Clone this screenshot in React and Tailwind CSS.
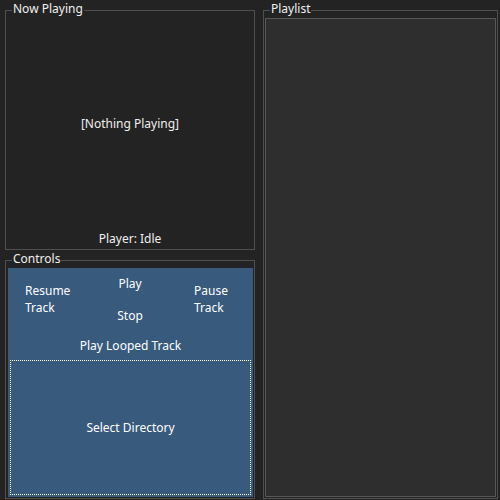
const GroupBox = ({ title, className, children }) => {
  return (
    <div className={`relative border border-[#4f4f4f] ${className}`}>
      <span className="absolute left-[6px] top-[-11px] bg-[#232323] px-[1px] text-[12px] leading-[17px] text-[#f0f0f0]">
        {title}
      </span>
      {children}
    </div>
  )
}

const App = () => {
  return (
    <div
      className="flex h-[500px] w-[500px] gap-[8px] bg-[#232323] pb-[1px] pl-[5px] pr-[2px] pt-[10px] text-[12px] leading-[17px] text-[#f0f0f0]"
      style={{ fontFamily: '"Noto Sans", "Open Sans", sans-serif' }}
    >
      <div className="flex w-[250px] flex-col gap-[10px]">
        <GroupBox title="Now Playing" className="flex h-[240px] flex-col">
          <div className="flex flex-1 items-center justify-center pt-[5px]">[Nothing Playing]</div>
          <div className="pb-[2px] text-center">Player: Idle</div>
        </GroupBox>

        <GroupBox title="Controls" className="flex flex-1 flex-col pb-[1px] pl-[2px] pr-[1px] pt-[7px]">
          <div className="flex flex-1 flex-col bg-[#385a7d] text-white">
            <div className="flex h-[63px]">
              <div className="flex w-[81px] items-center pb-[1px] pl-[17px]">
                <span>
                  Resume
                  <br />
                  Track
                </span>
              </div>
              <div className="flex w-[82px] flex-col">
                <div className="flex h-[31px] items-center justify-center">Play</div>
                <div className="flex h-[32px] items-center justify-center">Stop</div>
              </div>
              <div className="flex flex-1 items-center pb-[1px] pl-[23px]">
                <span>
                  Pause
                  <br />
                  Track
                </span>
              </div>
            </div>
            <div className="flex h-[28px] items-center justify-center">Play Looped Track</div>
            <div className="flex flex-1 flex-col px-[2px] pb-[2px] pt-[1px]">
              <div className="flex flex-1 items-center justify-center border border-dotted border-white">
                Select Directory
              </div>
            </div>
          </div>
        </GroupBox>
      </div>

      <GroupBox title="Playlist" className="flex w-[235px] flex-col px-[1px] pb-[1px] pt-[7px]">
        <div className="flex-1 border border-[#575757] bg-[#2e2e2e]"></div>
      </GroupBox>
    </div>
  )
}

export default App
